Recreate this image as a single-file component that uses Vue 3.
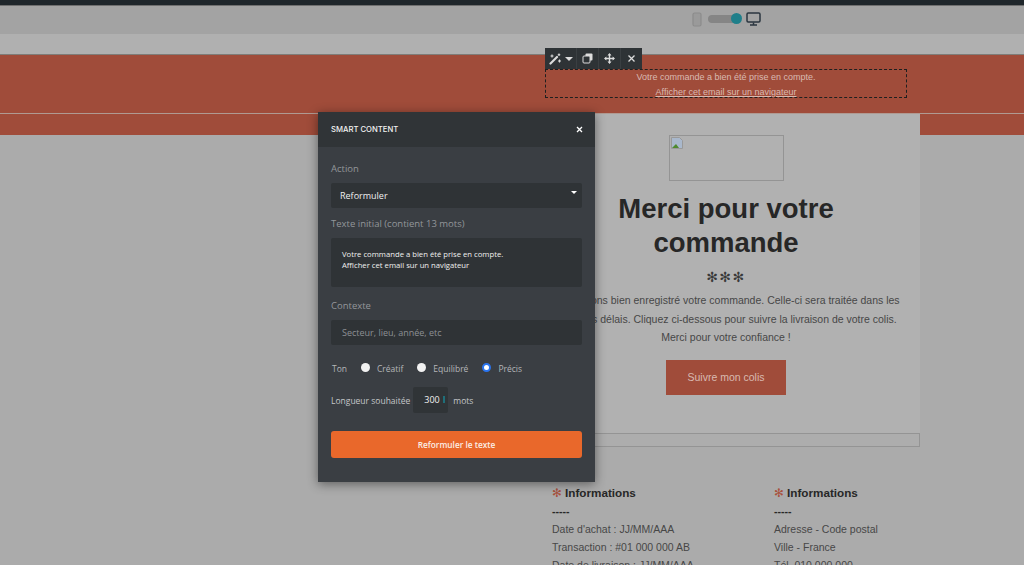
<template>
  <div class="page">
    <div class="topbar"></div>
    <div class="devicebar">
      <div class="switcher">
        <svg class="phone" width="10" height="15" viewBox="0 0 10 15">
          <rect x="1" y="1" width="8" height="13" rx="1.5" fill="#9a9a9a" stroke="#8c8c8c" stroke-width="1.2" />
        </svg>
        <span class="track"><span class="knob"></span></span>
        <svg width="15" height="14" viewBox="0 0 15 14">
          <rect x="1" y="1" width="13" height="9" rx="1.2" fill="none" stroke="#2b3640" stroke-width="1.5" />
          <path d="M7.5 10.5v2M4 13h7" stroke="#2b3640" stroke-width="1.5" />
        </svg>
      </div>
    </div>
    <div class="strip"></div>

    <div class="hero">
      <div class="hero-top">
        <div class="column">
          <div class="preheader">
            <div class="tools">
              <span class="tool wand">
                <svg width="13" height="12" viewBox="0 0 13 12">
                  <path d="M1.5 10.5 8 4" stroke="#ddd" stroke-width="2.2" stroke-linecap="round" />
                  <path d="M3 1.5v3M1.5 3h3M10.500 6.500v3M9 8h3M10 .5v2.500M8.750 1.750h2.500" stroke="#ddd" stroke-width="1.100" />
                </svg>
                <i class="caret"></i>
              </span>
              <span class="tool">
                <svg width="11" height="11" viewBox="0 0 11 11">
                  <rect x="3.5" y=".5" width="7" height="7" rx="1" fill="#ddd" />
                  <rect x="1" y="3" width="7" height="7" rx="1" fill="#2e3336" stroke="#ddd" />
                </svg>
              </span>
              <span class="tool">
                <svg width="11" height="11" viewBox="0 0 11 11">
                  <path d="M5.5 1v9M1 5.5h9" stroke="#ddd" stroke-width="1.400" />
                  <path d="M5.5 0 7.500 2.400H3.500zM5.5 11 3.500 8.600h4zM0 5.500l2.400-2v4zM11 5.500 8.600 7.500v-4z" fill="#ddd" />
                </svg>
              </span>
              <span class="tool">
                <svg width="9" height="9" viewBox="0 0 9 9">
                  <path d="M1.500 1.500l6 6M7.500 1.500l-6 6" stroke="#ddd" stroke-width="1.300" />
                </svg>
              </span>
            </div>
            <p>Votre commande a bien été prise en compte.</p>
            <a>Afficher cet email sur un navigateur</a>
          </div>
        </div>
      </div>
      <div class="hero-bottom"></div>
    </div>

    <div class="column">
      <main class="panel">
        <div class="broken">
          <svg width="12" height="12" viewBox="0 0 12 12">
            <path d="M.5.500h8l3 3v8H.5z" fill="#a9b8cc" stroke="#999" />
            <path d="M1 11 5 7l3 4z" fill="#4f8a2e" />
          </svg>
        </div>
        <h1>Merci pour votre commande</h1>
        <div class="stars">✻✻✻</div>
        <div class="intro">
          <p>Nous avons bien enregistré votre commande. Celle-ci sera traitée dans les</p>
          <p>meilleurs délais. Cliquez ci-dessous pour suivre la livraison de votre colis.</p>
          <p>Merci pour votre confiance !</p>
        </div>
        <a class="cta">Suivre mon colis</a>
      </main>
      <div class="empty-row"></div>

      <section class="infos">
        <div v-for="info in infos" :key="info.id" class="info">
          <h3><span class="mark">✻</span> Informations</h3>
          <div class="dashes">-----</div>
          <p v-for="line in info.lines" :key="line">{{ line }}</p>
        </div>
      </section>
    </div>

    <div class="modal">
      <header class="modal-head">
        <span>SMART CONTENT</span>
        <svg width="7" height="7" viewBox="0 0 7 7">
          <path d="M1 1l5 5M6 1 1 6" stroke="#fff" stroke-width="1.300" />
        </svg>
      </header>
      <form class="modal-body" @submit.prevent>
        <label class="label">Action</label>
        <div class="select-wrap">
          <select v-model="action" class="field">
            <option>Reformuler</option>
          </select>
          <i class="arrow"></i>
        </div>
        <label class="label second">Texte initial (contient 13 mots)</label>
        <textarea v-model="source" class="field area" spellcheck="false"></textarea>
        <label class="label third">Contexte</label>
        <input class="field context" type="text" placeholder="Secteur, lieu, année, etc" />
        <div class="tones">
          <span class="ton">Ton</span>
          <label v-for="t in tones" :key="t" class="tone">
            <input v-model="tone" type="radio" :value="t" />
            <span>{{ t }}</span>
          </label>
        </div>
        <div class="length">
          <span>Longueur souhaitée</span>
          <span class="count">300<i></i></span>
          <span>mots</span>
        </div>
        <button type="submit" class="submit">Reformuler le texte</button>
      </form>
    </div>
  </div>
</template>

<script setup>
import { ref } from 'vue'

const action = ref('Reformuler')
const source = ref('Votre commande a bien été prise en compte.\nAfficher cet email sur un navigateur')
const tones = ['Créatif', 'Equilibré', 'Précis']
const tone = ref('Précis')

const infos = [
  { id: 1, lines: ["Date d'achat : JJ/MM/AAA", 'Transaction : #01 000 000 AB', 'Date de livraison : JJ/MM/AAA'] },
  { id: 2, lines: ['Adresse - Code postal', 'Ville - France', 'Tél. 010 000 000'] },
]
</script>

<style scoped>
.page {
  position: relative;
  height: 565px;
  overflow: hidden;
  background: #ababab;
  font-family: "Liberation Sans", Arial, sans-serif;
}

.topbar {
  height: 5px;
  background: #1f262b;
  border-bottom: 1px solid #6f6f6f;
}

.devicebar {
  height: 28px;
  padding-left: 532px;
  background: #a3a3a3;
}

.switcher {
  width: 388px;
  height: 26px;
  display: flex;
  align-items: center;
  justify-content: center;
  gap: 6px;
}

.track {
  position: relative;
  width: 32px;
  height: 8px;
  border-radius: 4px;
  background: #858585;
}

.knob {
  position: absolute;
  right: -2px;
  top: -2px;
  width: 11px;
  height: 11px;
  border-radius: 50%;
  background: #1f7f8a;
}

.strip {
  height: 20px;
  background: #b0b0b0;
  border-bottom: 1px solid #7f7c78;
}

.hero-top {
  height: 58px;
  background: #a04c3a;
  border-bottom: 1px solid #b09a92;
}

.hero-bottom {
  height: 21px;
  background: #a04c3a;
}

.column {
  margin-left: 532px;
  width: 388px;
}

.preheader {
  position: relative;
  top: 14px;
  margin-left: 13px;
  width: 362px;
  height: 29px;
  box-sizing: border-box;
  border: 1px dashed #1f1f1f;
  text-align: center;
  font-size: 9px;
  color: #d9bab1;
}

.preheader p {
  margin: 0;
  padding-top: 1px;
  line-height: 13px;
}

.preheader a {
  display: block;
  line-height: 16px;
  text-decoration: underline;
}

.tools {
  position: absolute;
  left: -1px;
  top: -22px;
  height: 21px;
  display: flex;
  background: #2e3336;
}

.tool {
  width: 21px;
  display: flex;
  align-items: center;
  justify-content: center;
  border-right: 1px solid #3a3f42;
}

.tool:last-child {
  border-right: 0;
}

.tool.wand {
  width: 31px;
  gap: 3px;
}

.caret {
  border: 4px solid transparent;
  border-top: 4px solid #ddd;
  border-bottom: 0;
}

.panel {
  margin-top: -22px;
  position: relative;
  height: 320px;
  box-sizing: border-box;
  padding-top: 21px;
  background: #b1b1b1;
  text-align: center;
  overflow: hidden;
  border-top: 1px solid #b09a92;
}

.broken {
  width: 115px;
  height: 46px;
  box-sizing: border-box;
  margin: 0 auto;
  padding: 1px;
  border: 1px solid #949494;
  text-align: left;
  line-height: 0;
}

.panel h1 {
  margin: 11px auto 0;
  width: 300px;
  font-size: 27.5px;
  line-height: 34px;
  font-weight: 700;
  color: #272727;
}

.stars {
  margin-top: 7px;
  font-family: "DejaVu Sans", sans-serif;
  font-size: 14px;
  line-height: 20px;
  letter-spacing: 1.5px;
  color: #3a3a3a;
}

.intro {
  margin-top: 4px;
  margin-left: -40px;
  margin-right: -40px;
  font-size: 10.5px;
  line-height: 18.5px;
  color: #474747;
  white-space: nowrap;
}

.intro p {
  margin: 0;
}

.cta {
  display: block;
  width: 120px;
  height: 35px;
  margin: 13px auto 0;
  background: #a04c3a;
  color: #d9bab1;
  font-size: 10.5px;
  line-height: 35px;
}

.empty-row {
  height: 14px;
  box-sizing: border-box;
  border: 1px solid #949494;
  background: #adadad;
}

.infos {
  display: flex;
  margin-top: 37px;
  padding-left: 20px;
}

.info {
  flex: none;
  width: 222px;
  font-size: 10.5px;
  line-height: 18px;
  color: #474747;
}

.info h3 {
  margin: 0;
  font-size: 11.7px;
  line-height: 18px;
  color: #272727;
}

.mark {
  color: #a8503c;
  font-family: "DejaVu Sans", sans-serif;
}

.dashes {
  font-weight: 700;
  color: #272727;
}

.info p {
  margin: 0;
}

.modal {
  position: absolute;
  left: 318px;
  top: 112px;
  width: 277px;
  height: 370px;
  background: #3a3e43;
  box-shadow: 0 2px 10px rgba(0, 0, 0, .45);
  font-family: "Open Sans", sans-serif;
  color: #d8d8d8;
}

.modal-head {
  height: 35px;
  padding: 0 12px 0 13px;
  display: flex;
  align-items: center;
  justify-content: space-between;
  background: #303437;
  font-family: Inter, sans-serif;
  font-size: 7.7px;
  font-weight: 500;
  color: #f2f2f2;
  box-sizing: border-box;
}

.modal-body {
  padding: 15px 13px 0;
  display: flex;
  flex-direction: column;
  align-items: flex-start;
}

.label {
  font-size: 9.5px;
  line-height: 14px;
  color: #93969a;
}

.label.second {
  margin-top: 9px;
}

.label.third {
  margin-top: 12px;
}

.select-wrap {
  position: relative;
  margin-top: 7px;
}

.field {
  display: block;
  width: 251px;
  height: 25px;
  box-sizing: border-box;
  padding: 0 9px;
  border: 0;
  border-radius: 2px;
  outline: 0;
  appearance: none;
  background: #2f3336;
  font-family: "Open Sans", sans-serif;
  font-size: 9px;
  color: #f0f0f0;
}

.arrow {
  position: absolute;
  right: 5px;
  top: 8px;
  border: 3px solid transparent;
  border-top: 3px solid #fff;
  border-bottom: 0;
}

.area {
  height: 49px;
  margin-top: 7px;
  padding: 11px 11px;
  font-size: 7.7px;
  line-height: 11px;
  resize: none;
  overflow: hidden;
}

.context {
  margin-top: 7px;
  padding-left: 11px;
}

.context::placeholder {
  color: #8d9094;
  opacity: 1;
}

.tones {
  display: flex;
  align-items: center;
  height: 20px;
  margin-top: 13px;
  padding-left: 1px;
  font-size: 8.5px;
  color: #b4b6b9;
}

.ton {
  width: 29px;
}

.tone {
  display: flex;
  align-items: center;
  margin-right: 14px;
}

.tone span {
  margin-left: 7px;
}

.tone input {
  appearance: none;
  width: 9px;
  height: 9px;
  margin: -2px 0 0;
  border-radius: 50%;
  background: #f2f2f2;
}

.tone input:checked {
  background: #fff;
  border: 2.5px solid #2a74ee;
  box-sizing: border-box;
}

.length {
  display: flex;
  align-items: center;
  gap: 3px;
  height: 26px;
  margin-top: 9px;
  font-size: 8.5px;
  color: #c4c6c9;
}

.count {
  position: relative;
  width: 35px;
  height: 26px;
  margin-right: 2px;
  box-sizing: border-box;
  padding-left: 11px;
  border-radius: 2px;
  background: #303437;
  line-height: 26px;
  font-size: 9px;
  color: #f0f0f0;
}

.count i {
  position: absolute;
  right: 3px;
  top: 9px;
  width: 2px;
  height: 7px;
  background: #1f6f7a;
}

.submit {
  width: 251px;
  height: 27px;
  margin-top: 18px;
  border: 0;
  border-radius: 3px;
  background: #e9682b;
  font-family: "Open Sans", sans-serif;
  font-size: 8.3px;
  font-weight: 600;
  color: #fbeee6;
}
</style>

<style>
html,
body {
  margin: 0;
  overflow: hidden;
}
</style>
